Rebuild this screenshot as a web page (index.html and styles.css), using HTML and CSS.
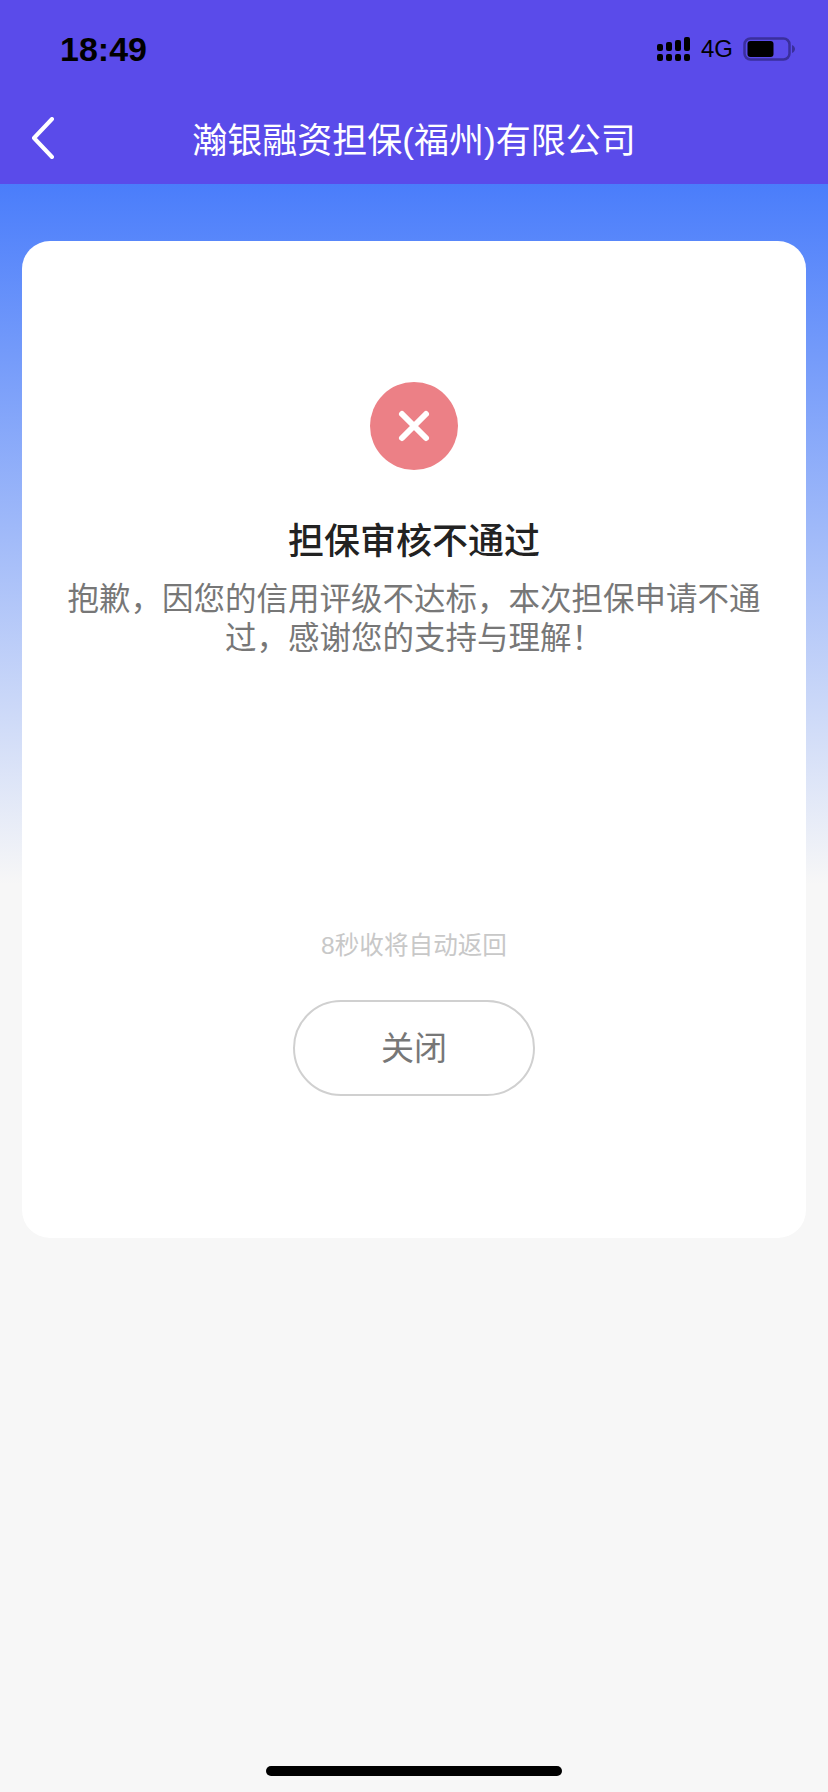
FILE: index.html
```html
<!DOCTYPE html>
<html lang="zh-CN">
<head>
    <meta charset="UTF-8">
    <meta name="viewport" content="width=device-width, initial-scale=1.0">
    <title>担保审核不通过</title>
    <link rel="stylesheet" href="styles.css">
</head>
<body>
    <div class="app">
        <header class="header">
            <div class="status-bar">
                <span class="time">18:49</span>
                <div class="status-icons">
                    <svg class="signal" width="34" height="26" viewBox="0 0 34 26">
                        <g fill="#000">
                            <rect x="0" y="8" width="6" height="7" rx="2"/>
                            <rect x="9" y="6" width="6" height="9" rx="2"/>
                            <rect x="18" y="4" width="6" height="11" rx="2"/>
                            <rect x="27" y="1" width="6" height="14" rx="2"/>
                            <rect x="0" y="18" width="6" height="7" rx="2"/>
                            <rect x="9" y="18" width="6" height="7" rx="2"/>
                            <rect x="18" y="18" width="6" height="7" rx="2"/>
                            <rect x="27" y="18" width="6" height="7" rx="2"/>
                        </g>
                    </svg>
                    <span class="network">4G</span>
                    <svg class="battery" width="52" height="24" viewBox="0 0 52 24">
                        <rect x="1.500" y="1.500" width="45" height="21" rx="6" fill="none" stroke="#3a2f9c" stroke-width="2.500"/>
                        <rect x="4.500" y="4" width="26" height="16" rx="3" fill="#000"/>
                        <path d="M49 8c2 1 3 2.500 3 4s-1 3-3 4z" fill="#3a2f9c"/>
                    </svg>
                </div>
            </div>
            <div class="nav-bar">
                <svg class="back" width="24" height="42" viewBox="0 0 24 42">
                    <path d="M21 2 3 21l18 19" fill="none" stroke="#fff" stroke-width="4" stroke-linecap="round" stroke-linejoin="round"/>
                </svg>
                <h1 class="nav-title">瀚银融资担保(福州)有限公司</h1>
            </div>
        </header>

        <main class="content">
            <div class="card">
                <div class="result-icon">
                    <svg width="34" height="34" viewBox="0 0 34 34">
                        <path d="M5 5 29 29M29 5 5 29" fill="none" stroke="#fff" stroke-width="6" stroke-linecap="round"/>
                    </svg>
                </div>
                <h2 class="result-title">担保审核不通过</h2>
                <p class="result-text">抱歉，因您的信用评级不达标，本次担保申请不通过，感谢您的支持与理解！</p>
                <p class="countdown">8秒收将自动返回</p>
                <button class="close-btn">关闭</button>
            </div>
            <div class="home-indicator"></div>
        </main>
    </div>
</body>
</html>
```

FILE: styles.css
```css
body {
    margin: 0;
    padding: 0;
    font-family: "Liberation Sans", "Noto Sans CJK SC", sans-serif;
    background-color: #f7f7f7;
}

.app {
    display: flex;
    flex-direction: column;
    height: 1792px;
}

.header {
    height: 184px;
    background-color: #5a4bea;
}

.status-bar {
    display: flex;
    justify-content: space-between;
    align-items: center;
    height: 50px;
    padding: 24px 33px 0 60px;
}

.time {
    font-size: 34px;
    font-weight: bold;
    color: #000;
}

.status-icons {
    display: flex;
    align-items: center;
    gap: 10px;
}

.network {
    font-size: 24px;
    color: #000;
}

.nav-bar {
    display: flex;
    align-items: center;
    justify-content: center;
    position: relative;
    height: 60px;
    margin-top: 33px;
}

.back {
    position: absolute;
    left: 31px;
    top: 10px;
}

.nav-title {
    margin: 0;
    font-size: 35px;
    font-weight: normal;
    color: #fff;
}

.content {
    flex: 1;
    display: flex;
    flex-direction: column;
    padding: 57px 22px 16px;
    background: linear-gradient(#4a7dfb, #f7f7f7 700px);
}

.card {
    display: flex;
    flex-direction: column;
    align-items: center;
    box-sizing: border-box;
    height: 997px;
    padding: 141px 30px 0;
    background: #fff;
    border-radius: 28px;
}

.result-icon {
    display: flex;
    align-items: center;
    justify-content: center;
    width: 88px;
    height: 88px;
    border-radius: 50%;
    background-color: #ec8086;
}

.result-title {
    margin: 47px 0 0;
    font-size: 36px;
    line-height: 50px;
    font-weight: 500;
    color: #222;
}

.result-text {
    margin: 13px 0 0;
    font-size: 31.500px;
    line-height: 39px;
    color: #777;
    text-align: center;
}

.countdown {
    margin: 270px 0 0;
    font-size: 24.600px;
    line-height: 36px;
    color: #c8c8c8;
}

.close-btn {
    box-sizing: border-box;
    width: 242px;
    height: 96px;
    margin-top: 36px;
    padding-bottom: 6px;
    background: #fff;
    border: 2px solid #d0d0d0;
    border-radius: 48px;
    font-family: inherit;
    font-size: 33px;
    color: #777;
    cursor: pointer;
}

.home-indicator {
    align-self: center;
    width: 296px;
    height: 10px;
    margin-top: auto;
    border-radius: 5px;
    background-color: #000;
}
```
